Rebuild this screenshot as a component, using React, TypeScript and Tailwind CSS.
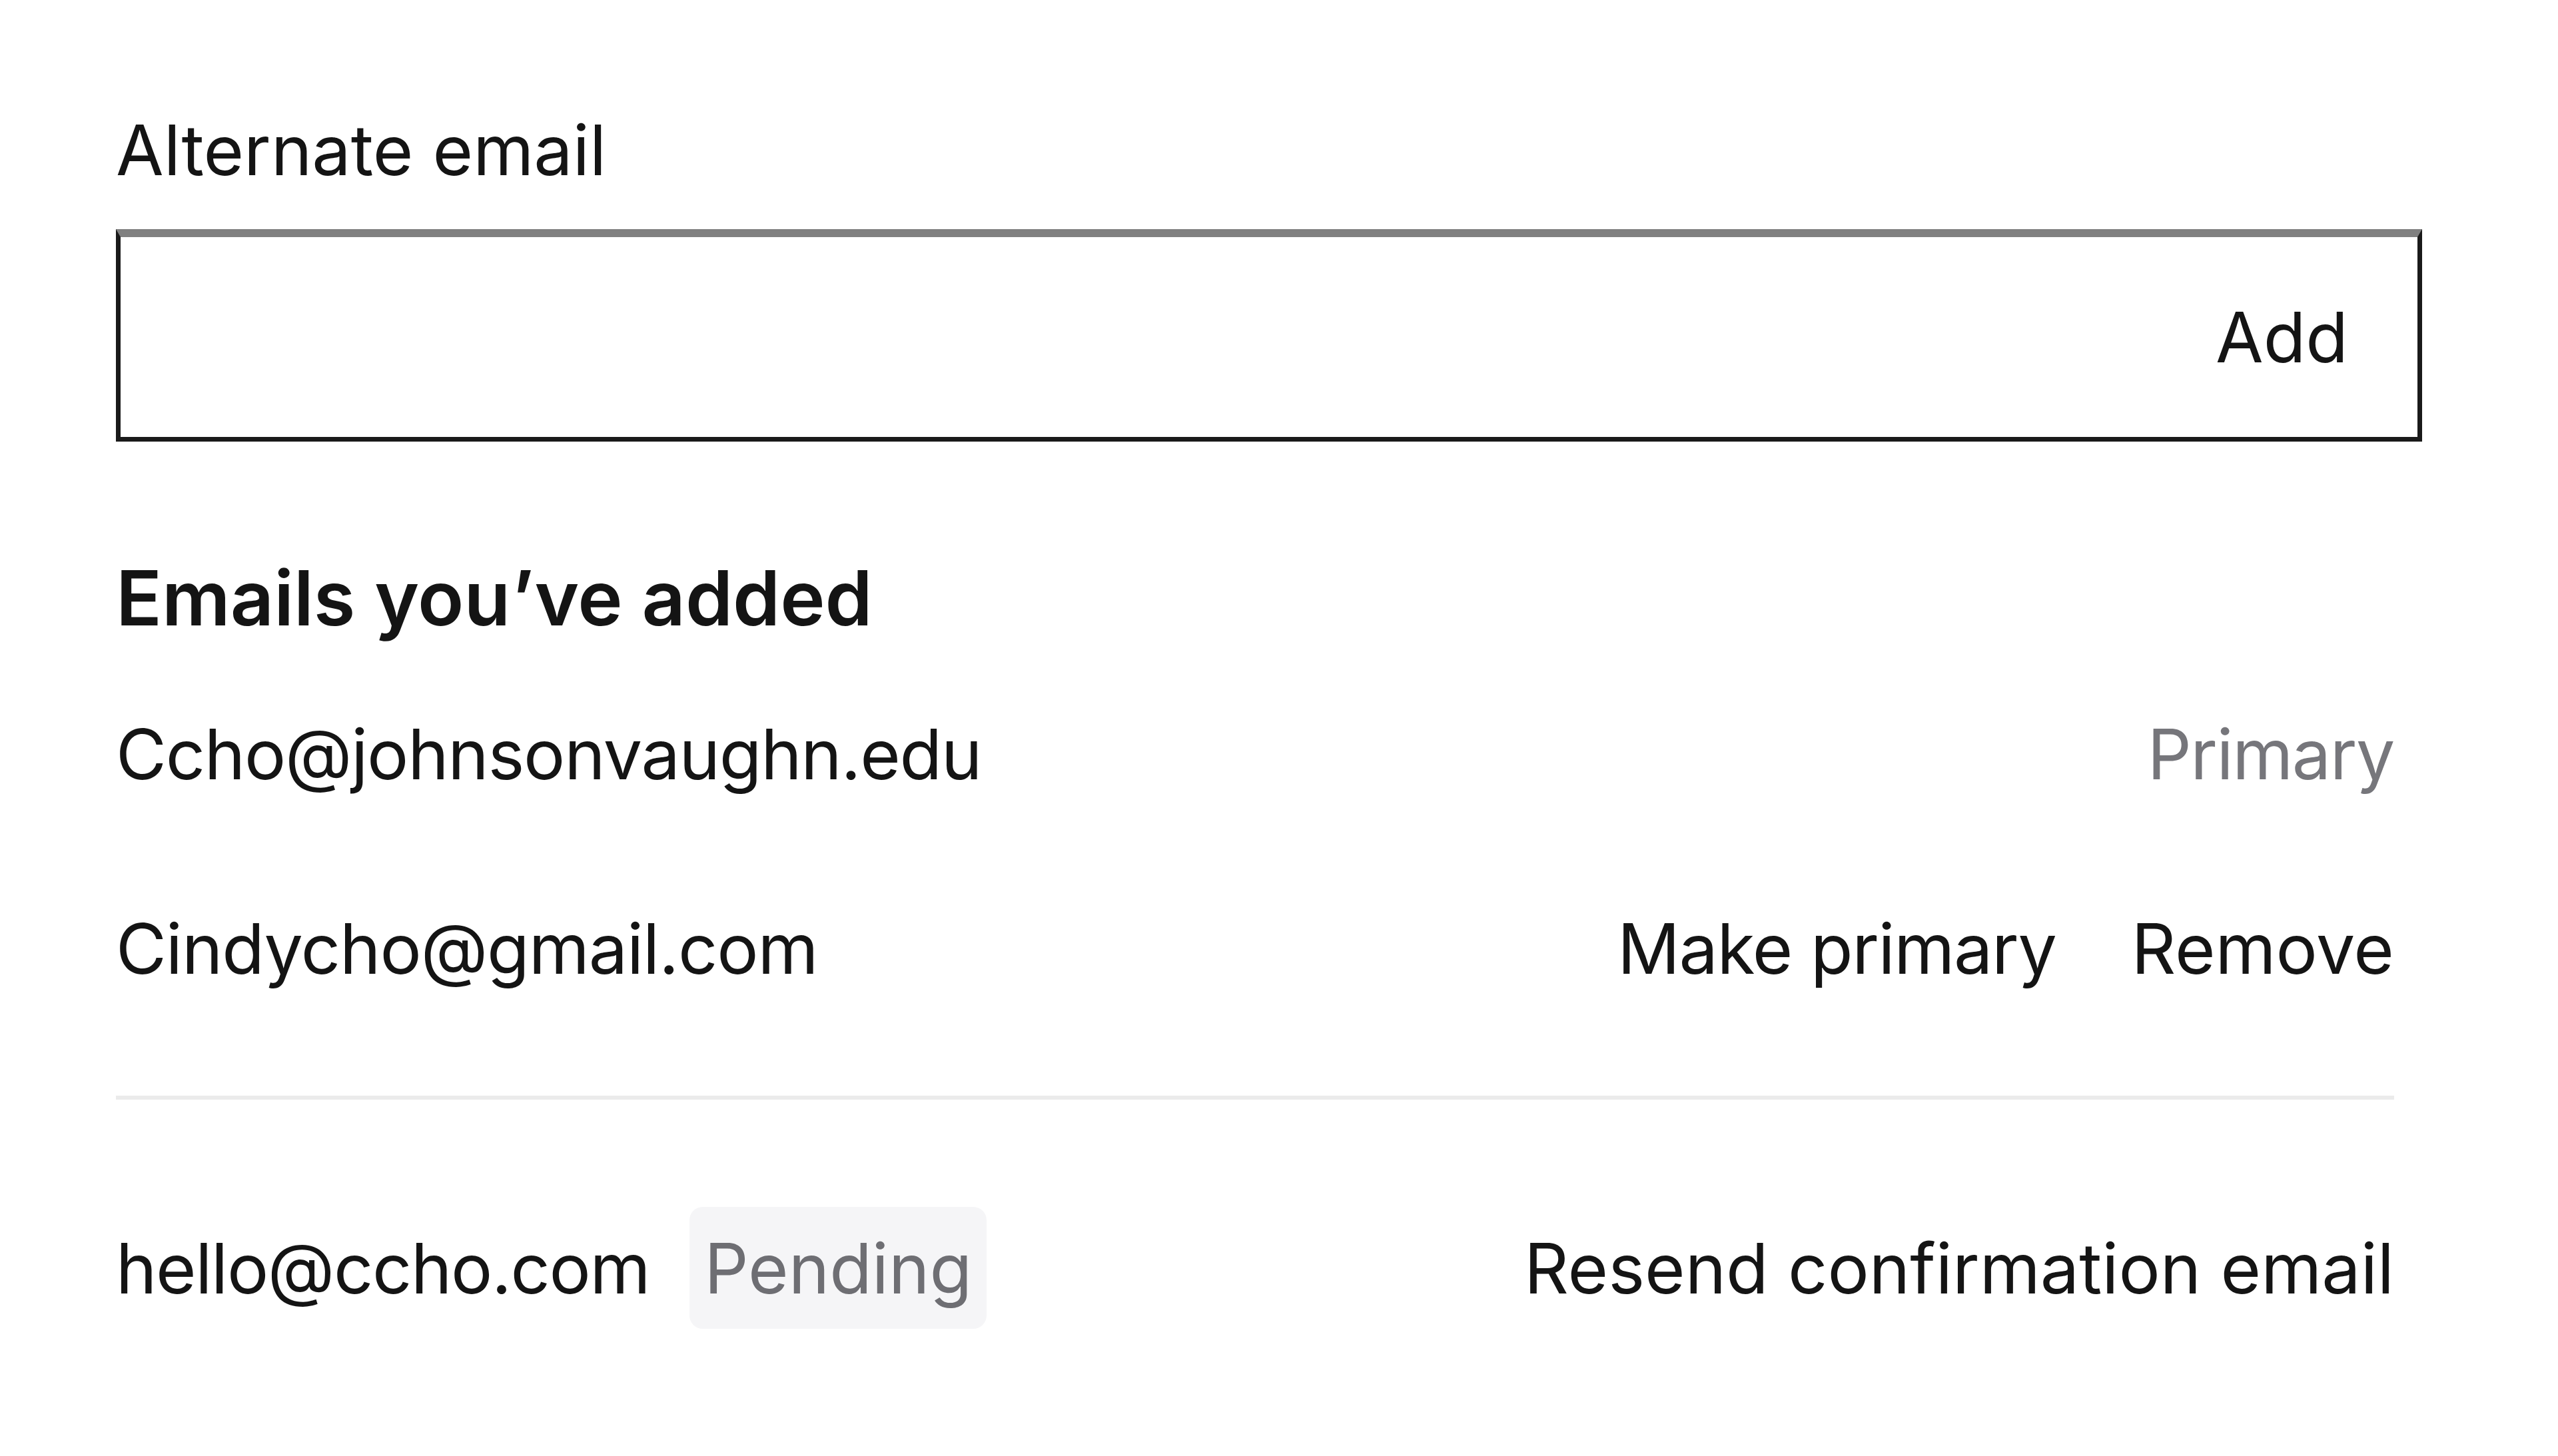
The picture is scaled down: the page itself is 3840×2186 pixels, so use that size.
import React from "react";

export default function App() {
  return (
    <div
      className="w-full h-[2186px] bg-white text-[#141414] pl-[174px] pr-[204px] flex flex-col"
      style={{ fontFamily: "Inter, 'Noto Sans', sans-serif" }}
    >
      <div className="mt-[173px] text-[104px] leading-none">Alternate email</div>

      <div className="mt-[67px] h-[319px] border-[7px] border-[#1a1a1a] border-t-[12px] border-t-[#808080] flex items-center justify-end pr-[104px]">
        <span className="text-[104px] leading-none">Add</span>
      </div>

      <div className="mt-[178px] text-[114px] leading-none font-semibold">Emails you’ve added</div>

      <div className="pr-[42px] flex flex-col">
        <div className="mt-[125px] flex items-center justify-between text-[104px] leading-none">
          <span className="tracking-[-1.3px]">Ccho@johnsonvaughn.edu</span>
          <span className="text-[#76767b] tracking-[-1.5px]">Primary</span>
        </div>

        <div className="mt-[188px] flex items-center justify-between text-[104px] leading-none">
          <span className="tracking-[-1.1px]">Cindycho@gmail.com</span>
          <div className="flex items-center gap-[113px]">
            <span className="tracking-[-1.4px]">Make primary</span>
            <span>Remove</span>
          </div>
        </div>

        <div className="mt-[169px] h-[6px] bg-[#ebebeb]" />

        <div className="mt-[161px] h-[183px] flex items-center justify-between text-[104px] leading-none">
          <div className="flex items-center h-full">
            <span className="tracking-[-1.4px]">hello@ccho.com</span>
            <span className="ml-[60px] h-full px-[22px] flex items-center rounded-[20px] bg-[#f5f5f7] text-[#6e6e73]">
              Pending
            </span>
          </div>
          <span>Resend confirmation email</span>
        </div>
      </div>
    </div>
  );
}
